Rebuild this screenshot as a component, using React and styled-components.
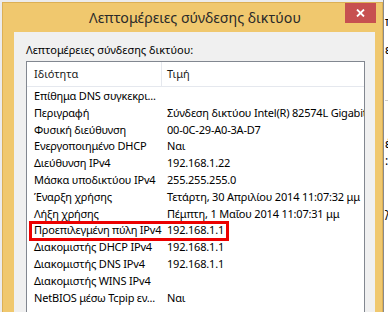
import React from 'react';
import styled, { createGlobalStyle } from 'styled-components';

const GlobalStyle = createGlobalStyle`
  html, body { margin: 0; padding: 0; }
  body { font-family: "Noto Sans", "Open Sans", sans-serif; color: #000; }
`;

const Desktop = styled.div`
  width: 388px;
  height: 312px;
  overflow: hidden;
  display: flex;
  background: #ececec;
`;

const Window = styled.div`
  width: 381px;
  flex-shrink: 0;
  margin: 2px 0 0 2px;
  box-sizing: border-box;
  background: #f0c86e;
  border: 1px solid #dcb055;
  border-bottom: none;
  display: flex;
  flex-direction: column;
`;

const TitleBar = styled.div`
  height: 29px;
  display: grid;
  grid-template-columns: 1fr auto 1fr;
`;

const Title = styled.div`
  grid-column: 2;
  font-size: 14.2px;
  line-height: 29px;
  color: #2a2a2a;
  padding-left: 5px;
  white-space: nowrap;
`;

const CloseButton = styled.div`
  grid-column: 3;
  justify-self: end;
  width: 31px;
  height: 20px;
  margin-right: 6px;
  background: #c75050;
  display: flex;
  align-items: center;
  justify-content: center;
`;

const Client = styled.div`
  flex: 1;
  margin: 0 7px 0 11px;
  background: #f0f0f0;
  padding: 10px 10px 0 12px;
  display: flex;
  flex-direction: column;
`;

const Caption = styled.div`
  font-size: 11px;
  line-height: 16px;
  margin-bottom: 3px;
  white-space: nowrap;
`;

const ListView = styled.div`
  flex: 1;
  background: #fff;
  border: 1px solid #828790;
  border-bottom: none;
  overflow: hidden;
`;

const Columns = styled.div`
  display: grid;
  grid-template-columns: 135px 1fr;
`;

const Header = styled(Columns)`
  height: 24px;
  border-bottom: 1px solid #e5e8ee;
  margin-bottom: 1px;
`;

const HeadCell = styled.div`
  font-size: 11px;
  line-height: 24px;
  padding-left: ${p => (p.$first ? '7px' : '5px')};
  border-right: ${p => (p.$first ? '1px solid #e5e8ee' : 'none')};
  color: #1a1a1a;
`;

const Row = styled(Columns)`
  height: 16.8px;
  position: relative;

  ${p => p.$marked && `
    &::after {
      content: '';
      position: absolute;
      left: 2px;
      top: -1.4px;
      width: 200px;
      height: 20px;
      box-sizing: border-box;
      border: 3px solid #ec0000;
    }
  `}
`;

const Cell = styled.div`
  font-size: 11px;
  letter-spacing: -0.2px;
  line-height: 16.8px;
  padding-left: ${p => (p.$first ? '7px' : '5px')};
  white-space: nowrap;
  overflow: hidden;
`;

const Behind = styled.div`
  flex: 1;
  background: #fff;
  border-left: 1px solid #8a8a8a;
  display: flex;
  flex-direction: column;
  padding-left: 1px;
`;

const Glyph = styled.div`
  font-size: 12px;
  line-height: 16px;
  margin-top: ${p => p.$gap}px;
  white-space: nowrap;
`;

const Rule = styled.div`
  height: 1px;
  background: #d0d0d0;
  margin-top: ${p => p.$gap}px;
`;

const rows = [
  ['Επίθημα DNS συγκεκρι...', ''],
  ['Περιγραφή', 'Σύνδεση δικτύου Intel(R) 82574L Gigabit'],
  ['Φυσική διεύθυνση', '00-0C-29-A0-3A-D7'],
  ['Ενεργοποιημένο DHCP', 'Ναι'],
  ['Διεύθυνση IPv4', '192.168.1.22'],
  ['Μάσκα υποδικτύου IPv4', '255.255.255.0'],
  ['Έναρξη χρήσης', 'Τετάρτη, 30 Απριλίου 2014 11:07:32 μμ'],
  ['Λήξη χρήσης', 'Πέμπτη, 1 Μαΐου 2014 11:07:31 μμ'],
  ['Προεπιλεγμένη πύλη IPv4', '192.168.1.1', true],
  ['Διακομιστής DHCP IPv4', '192.168.1.1'],
  ['Διακομιστής DNS IPv4', '192.168.1.1'],
  ['Διακομιστής WINS IPv4', ''],
  ['NetBIOS μέσω Tcpip εν...', 'Ναι'],
];

export default function App() {
  return (
    <>
      <GlobalStyle />
      <Desktop>
        <Window>
          <TitleBar>
            <Title>Λεπτομέρειες σύνδεσης δικτύου</Title>
            <CloseButton>
              <svg width="9" height="8" viewBox="0 0 9 8">
                <path d="M1 0.5 L8 7.5 M8 0.5 L1 7.5" stroke="#fff" strokeWidth="1.8" />
              </svg>
            </CloseButton>
          </TitleBar>
          <Client>
            <Caption>Λεπτομέρειες σύνδεσης δικτύου:</Caption>
            <ListView>
              <Header>
                <HeadCell $first>Ιδιότητα</HeadCell>
                <HeadCell>Τιμή</HeadCell>
              </Header>
              {rows.map(([prop, value, marked]) => (
                <Row key={prop} $marked={marked}>
                  <Cell $first>{prop}</Cell>
                  <Cell>{value}</Cell>
                </Row>
              ))}
            </ListView>
          </Client>
        </Window>
        <Behind>
          <Glyph $gap={14}>πρ</Glyph>
          <Glyph $gap={12}>ετ</Glyph>
          <Rule $gap={42} />
          <Glyph $gap={35}>έν</Glyph>
          <Glyph $gap={1}>:</Glyph>
          <Glyph $gap={39}>λ</Glyph>
        </Behind>
      </Desktop>
    </>
  );
}
